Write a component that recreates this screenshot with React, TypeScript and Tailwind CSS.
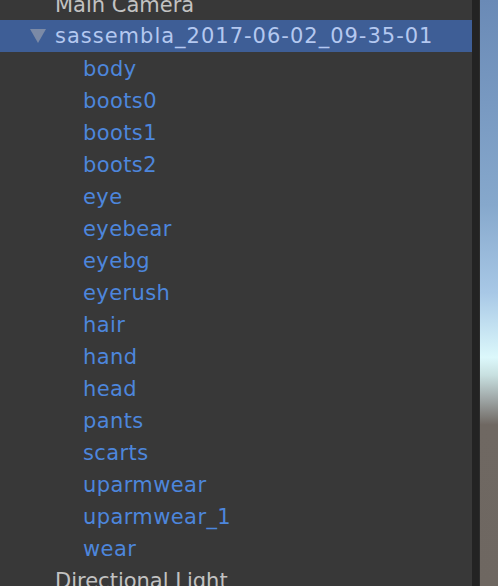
const children = [
  "body",
  "boots0",
  "boots1",
  "boots2",
  "eye",
  "eyebear",
  "eyebg",
  "eyerush",
  "hair",
  "hand",
  "head",
  "pants",
  "scarts",
  "uparmwear",
  "uparmwear_1",
  "wear",
];

export default function App() {
  return (
    <main className="flex h-[586px] w-[498px] overflow-hidden bg-[#383838] font-['DejaVu_Sans',sans-serif] text-[21px]">
      {/* hierarchy */}
      <section className="w-[472px] shrink-0 -mt-[12px]">
        <div className="flex h-[32px] items-center pt-[3px] pl-[55px] text-[#c2c2c2]">
          Main Camera
        </div>
        <div className="flex h-[32px] items-center pt-[2px] bg-[#3e5e96] text-[#b4c8f0] tracking-[1px] whitespace-nowrap">
          <svg width="16" height="16" viewBox="0 0 16 16" className="ml-[30px] mr-[9px] shrink-0 -mt-[2px]">
            <path d="M0 1 H16 L8 15 Z" fill="#7b8aa6" />
          </svg>
          sassembla_2017-06-02_09-35-01
        </div>
        {children.map((c) => (
          <div key={c} className="flex h-[32px] items-center pt-[3px] pl-[83px] text-[#4d86dc] tracking-[0.4px]">
            {c}
          </div>
        ))}
        <div className="flex h-[32px] items-center pt-[3px] pl-[55px] text-[#c2c2c2]">
          Directional Light
        </div>
      </section>

      {/* splitter */}
      <div className="w-[7px] shrink-0 bg-[#232323]" />
      <div className="w-px shrink-0 bg-[#2c2c2c]" />

      {/* scene view edge */}
      <div className="flex-1 bg-[linear-gradient(to_bottom,#6a8ab6_0%,#86a8cc_35%,#a8c8e6_50%,#dcf8fb_61%,#c8e0e0_64%,#a0a8a8_68%,#6f6862_72.5%,#6e6761_100%)]" />
    </main>
  );
}
